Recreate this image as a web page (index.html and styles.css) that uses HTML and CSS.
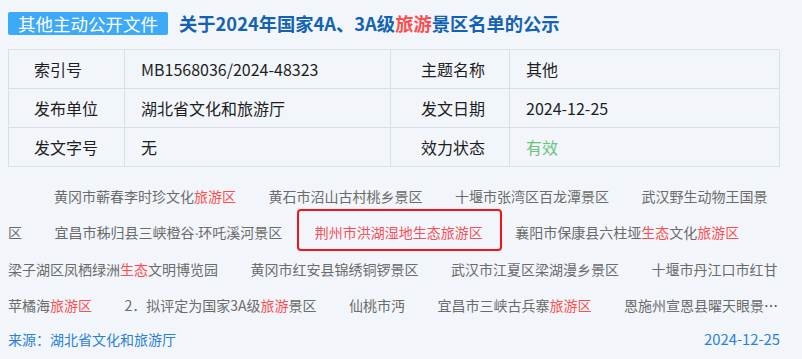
FILE: index.html
```
<!DOCTYPE html>
<html lang="zh-CN">
<head>
<meta charset="utf-8">
<title>关于2024年国家4A、3A级旅游景区名单的公示</title>
<link rel="stylesheet" href="styles.css">
</head>
<body>
<div class="page">
  <div class="header">
    <span class="badge">其他主动公开文件</span>
    <h1 class="title">关于2024年国家4A、3A级<span class="hl">旅游</span>景区名单的公示</h1>
  </div>
  <div class="meta">
    <div class="cell c1">索引号</div>
    <div class="cell c2">MB1568036/2024-48323</div>
    <div class="cell c3">主题名称</div>
    <div class="cell c4">其他</div>
    <div class="cell c1">发布单位</div>
    <div class="cell c2">湖北省文化和旅游厅</div>
    <div class="cell c3">发文日期</div>
    <div class="cell c4">2024-12-25</div>
    <div class="cell c1 last">发文字号</div>
    <div class="cell c2 last">无</div>
    <div class="cell c3 last">效力状态</div>
    <div class="cell c4 last valid">有效</div>
  </div>
  <div class="list"><span class="item">黄冈市蕲春李时珍文化<em>旅游区</em></span><span class="item">黄石市沼山古村桃乡景区</span><span class="item">十堰市张湾区百龙潭景区</span><span class="item">武汉野生动物王国景区</span><span class="item">宜昌市秭归县三峡橙谷<span class="dot">·</span>环吒溪河景区</span><span class="item marked">荆州市洪湖湿地生态旅游区</span><span class="item">襄阳市保康县六柱垭<em>生态</em>文化<em>旅游区</em></span><span class="item">梁子湖区凤栖绿洲<em>生态</em>文明博览园</span><span class="item">黄冈市红安县锦绣铜锣景区</span><span class="item">武汉市江夏区梁湖漫乡景区</span><span class="item">十堰市丹江口市红甘苹橘海<em>旅游区</em></span><span class="item">2．拟评定为国家3A级<em>旅游</em>景区</span><span class="item">仙桃市沔</span><span class="item">宜昌市三峡古兵寨<em>旅游区</em></span><span class="item">恩施州宣恩县曜天眼景区</span></div>
  <div class="footer">
    <span class="source">来源：湖北省文化和旅游厅</span>
    <span class="date">2024-12-25</span>
  </div>
</div>
</body>
</html>
```
FILE: styles.css
```
html {
  background: #f2f6fa;
}
body {
  margin: 8px;
  font-family: "Noto Sans CJK SC", "Noto Sans", sans-serif;
  color: #222;
}
.page {
  width: 772px;
}
.header {
  display: flex;
  align-items: center;
  padding-top: 4px;
  height: 23px;
  margin-bottom: 14px;
}
.badge {
  background: #3ea9f7;
  color: #fff;
  font-size: 17.5px;
  line-height: 23px;
  height: 23px;
  padding: 0 10px;
  border-radius: 2px;
  white-space: nowrap;
}
.title {
  margin: 0 0 0 11px;
  font-size: 18.3px;
  font-weight: bold;
  color: #1463b3;
  line-height: 23px;
  white-space: nowrap;
}
.hl {
  color: #ff4d4f;
}
.meta {
  display: grid;
  grid-template-columns: 116px 266px 119px 270px;
  width: 771px;
  border-top: 1px solid #d9dfe6;
  border-left: 1px solid #d9dfe6;
  box-sizing: border-box;
}
.cell {
  height: 39px;
  box-sizing: border-box;
  border-right: 1px solid #d9dfe6;
  border-bottom: 1px solid #d9dfe6;
  display: flex;
  align-items: center;
  font-size: 16px;
  color: #1e1e1e;
}
.c1 { padding-left: 25px; }
.c2 { padding-left: 16px; }
.c3 { padding-left: 30px; }
.c4 { padding-left: 16px; }
.valid {
  color: #6cc27d;
}
.list {
  margin-top: 11px;
  width: 771px;
  font-size: 14px;
  line-height: 36px;
  color: #111;
  text-indent: 46px;
  display: -webkit-box;
  -webkit-box-orient: vertical;
  -webkit-line-clamp: 4;
  overflow: hidden;
}
.item {
  color: #6b6b6b;
  margin-right: 32.5px;
}
.dot {
  font-family: "Liberation Sans", sans-serif;
  letter-spacing: -1px;
}
.item em {
  font-style: normal;
  color: #ff4d4f;
}
.marked {
  display: inline-block;
  position: relative;
  text-indent: 0;
  color: #f5515a;
}
.marked::after {
  content: "";
  position: absolute;
  left: -18px;
  right: -19px;
  top: -5px;
  bottom: -1px;
  border: 2px solid #f2141a;
  border-radius: 4px;
}
.footer {
  display: flex;
  justify-content: space-between;
  margin-top: 6px;
  font-size: 14px;
  line-height: 20px;
  color: #2a7fd9;
}
.date {
  font-size: 14.8px;
}
```
